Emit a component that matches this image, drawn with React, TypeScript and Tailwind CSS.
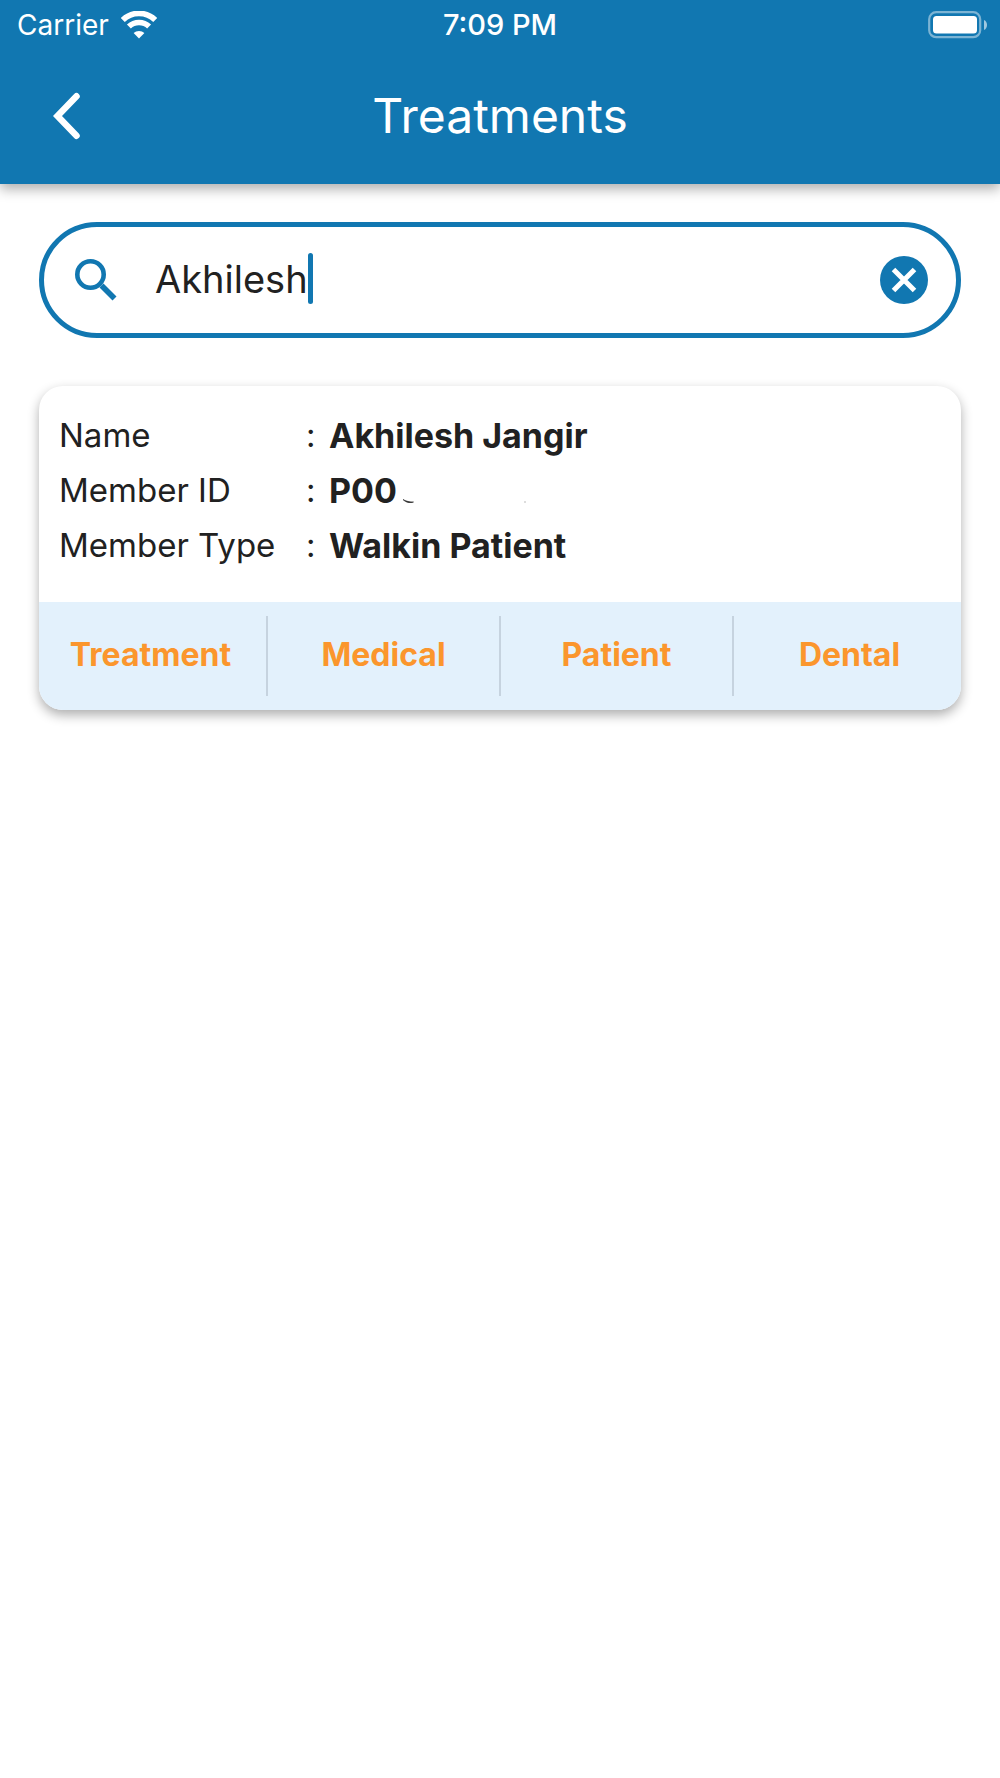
import { useState } from "react";

const details = [
  { label: "Name", value: "Akhilesh Jangir" },
  { label: "Member ID", value: "P00", masked: true },
  { label: "Member Type", value: "Walkin Patient" },
];

const tabs = ["Treatment", "Medical", "Patient", "Dental"];

function WifiIcon() {
  return (
    <svg width="36" height="28" viewBox="0 0 36 28" fill="none" aria-hidden="true">
      <path d="M1.8 9a23 23 0 0 1 32.400 0" stroke="white" strokeWidth="5.600" />
      <path d="M7.900 15.600a14.500 14.500 0 0 1 20.200 0" stroke="white" strokeWidth="5.600" />
      <path d="M18 27.500l-5.400-5.400a7.800 7.800 0 0 1 10.800 0z" fill="white" />
    </svg>
  );
}

function BatteryIcon() {
  return (
    <svg width="60" height="28" viewBox="0 0 60 28" fill="none" aria-hidden="true">
      <rect x="1.200" y="1.200" width="51" height="25" rx="7" stroke="white" strokeOpacity="0.45" strokeWidth="2.200" />
      <rect x="5" y="5" width="44" height="17.500" rx="3.500" fill="white" />
      <path d="M56 9c4 1.500 4 8.500 0 10z" fill="white" fillOpacity="0.6" />
    </svg>
  );
}

function StatusBar() {
  return (
    <div className="grid h-[50px] grid-cols-3 items-center px-3 text-[28px] leading-[50px]">
      <div className="flex items-center gap-3 pl-[5px]">
        <span>Carrier</span>
        <WifiIcon />
      </div>
      <span className="text-center text-[29px] font-medium">7:09 PM</span>
      <div className="flex justify-end">
        <BatteryIcon />
      </div>
    </div>
  );
}

function Header() {
  return (
    <header className="bg-[#1177b1] text-white shadow-[0_5px_12px_rgba(0,0,0,0.32)]">
      <StatusBar />
      <div className="grid h-[134px] grid-cols-[134px_1fr_134px] items-center pb-0.5">
        <button type="button" aria-label="Back" className="flex h-full items-center justify-center">
          <svg width="28" height="48" viewBox="0 0 28 48" fill="none" aria-hidden="true">
            <path
              d="M23.500 4.300L4.500 24l19 19.700"
              stroke="white"
              strokeWidth="6.500"
              strokeLinecap="round"
              strokeLinejoin="miter"
            />
          </svg>
        </button>
        <h1 className="text-center text-[48px] leading-[60px]">Treatments</h1>
      </div>
    </header>
  );
}

function SearchBox() {
  const [query, setQuery] = useState("Akhilesh");

  return (
    <div className="flex h-[116px] items-center rounded-full border-[5px] border-[#1177b1] pl-[31px] pr-7">
      <label htmlFor="search" aria-label="Search" className="mr-[38px] shrink-0">
        <svg width="42" height="42" viewBox="0 0 42 42" fill="none" stroke="#1177b1" aria-hidden="true">
          <circle cx="15.500" cy="15.500" r="13.200" strokeWidth="4.600" />
          <path d="M26.500 26.500L39.500 39.500" strokeWidth="5.600" />
        </svg>
      </label>
      <div className="flex min-w-0 flex-1 items-center pb-[3px]">
        <input
          id="search"
          type="text"
          value={query}
          onChange={(e) => setQuery(e.target.value)}
          className="field-sizing-content text-[38px] leading-[48px] text-[#212121] caret-transparent outline-none"
        />
        <span className="h-[51px] w-[5px] shrink-0 rounded-full bg-[#1177b1]" />
      </div>
      <button type="button" aria-label="Clear search" onClick={() => setQuery("")} className="shrink-0">
        <svg width="48" height="48" viewBox="0 0 48 48" fill="none" aria-hidden="true">
          <circle cx="24" cy="24" r="24" fill="#1177b1" />
          <path d="M13.500 13.500l21 21M34.500 13.500l-21 21" stroke="white" strokeWidth="5" />
        </svg>
      </button>
    </div>
  );
}

// What is left visible of the hidden digits
function MaskedDigits() {
  return (
    <svg width="134" height="24" viewBox="0 0 134 24" fill="none" aria-hidden="true">
      <path d="M6 20.500c3 3 6.500 4 10.500 2.500-4 .2-7.500-.8-10.500-2.500z" fill="#212121" stroke="#212121" strokeWidth="0.600" />
      <path d="M127 23h2" stroke="#bbbbbb" strokeWidth="1" />
    </svg>
  );
}

function PatientCard() {
  return (
    <article className="overflow-hidden rounded-3xl bg-white shadow-[0_5px_12px_rgba(0,0,0,0.32)]">
      <dl className="px-5 pb-[29px] pt-[22px] text-[33px] leading-[55px] text-[#212121]">
        {details.map(({ label, value, masked }) => (
          <div key={label} className="flex">
            <dt className="flex w-[270px] shrink-0">
              <span className="w-[247px]">{label}</span>
              <span>:</span>
            </dt>
            <dd className="flex items-center text-[34px] font-bold">
              {value}
              {masked && <MaskedDigits />}
            </dd>
          </div>
        ))}
      </dl>
      <div className="flex items-center bg-[#e3f1fc] py-3.5">
        {tabs.map((tab, index) => (
          <div key={tab} className="contents">
            {index > 0 && <span className="mx-1 h-20 w-0.5 bg-[#c6d3df]" />}
            <button type="button" className="h-20 flex-1 basis-0 pb-0.5 text-[32px] font-bold text-[#fb962d]">
              {tab}
            </button>
          </div>
        ))}
      </div>
    </article>
  );
}

export default function App() {
  return (
    <div className="min-h-screen bg-white font-['Inter',sans-serif]">
      <Header />
      <main className="flex flex-col gap-12 px-[39px] pt-[38px]">
        <SearchBox />
        <PatientCard />
      </main>
    </div>
  );
}
